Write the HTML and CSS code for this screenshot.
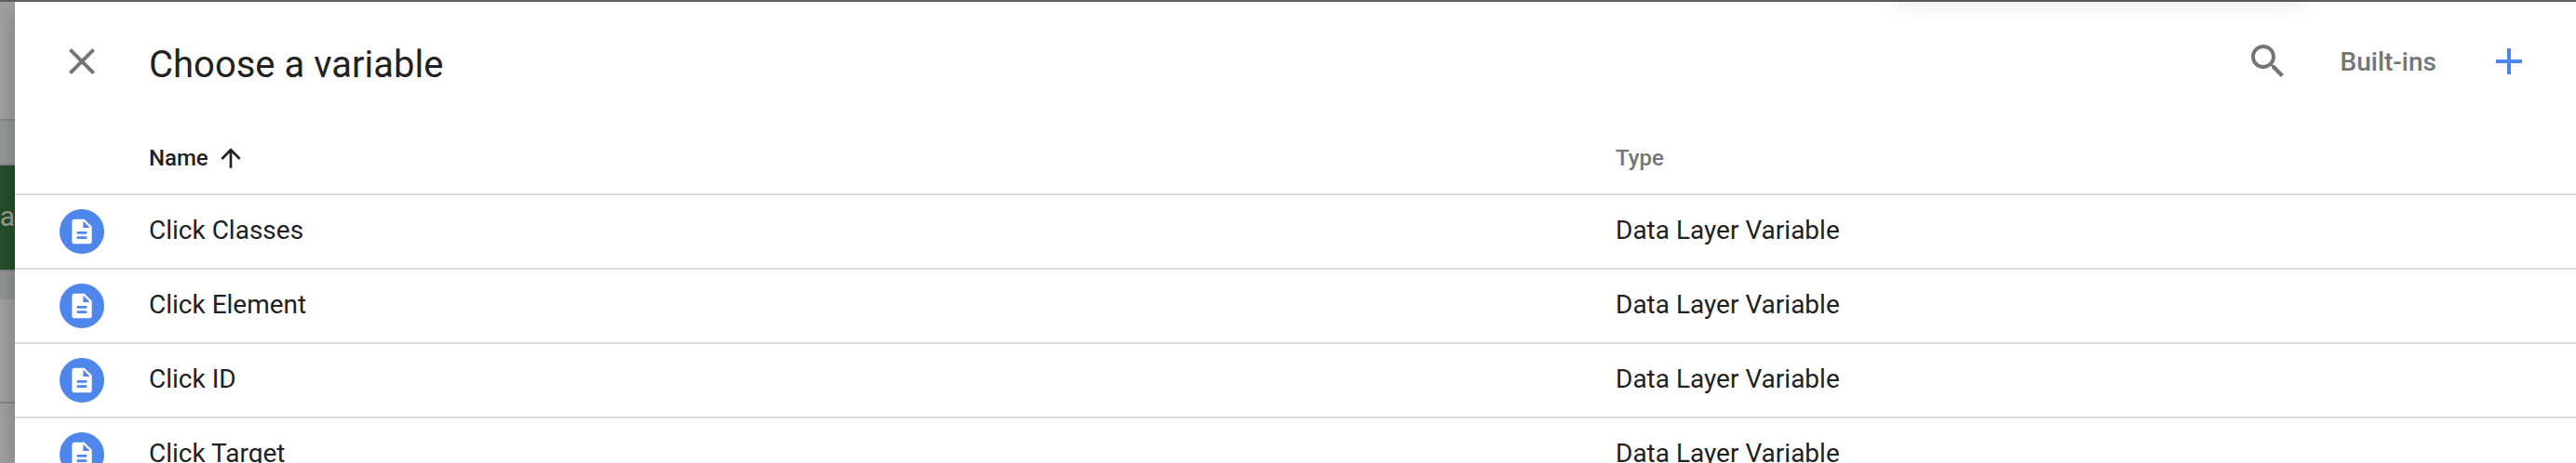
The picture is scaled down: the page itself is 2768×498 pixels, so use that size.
FILE: index.html
```
<!DOCTYPE html>
<html lang="en">
<head>
<meta charset="utf-8">
<title>Choose a variable</title>
<link rel="stylesheet" href="styles.css">
</head>
<body>
<svg class="defs" aria-hidden="true">
  <symbol id="doc" viewBox="0 0 24 24"><path d="M14 2H6c-1.100 0-1.990.9-1.990 2L4 20c0 1.100.890 2 1.990 2H18c1.100 0 2-.9 2-2V8l-6-6zm2 16H8v-2h8v2zm0-4H8v-2h8v2zm-3-5V3.500L18.500 9H13z"/></symbol>
</svg>
<div class="app">
  <div class="backdrop" aria-hidden="true">
    <div class="strip strip-top"></div>
    <div class="strip strip-bar"></div>
    <div class="strip strip-green"><span>oa</span></div>
    <div class="strip strip-gap"></div>
    <div class="strip strip-card"></div>
  </div>
  <main class="panel">
    <header class="header">
      <button class="icon-button" aria-label="Close"><svg viewBox="0 0 24 24"><path d="M19 6.410L17.590 5 12 10.590 6.410 5 5 6.410 10.590 12 5 17.590 6.410 19 12 13.410 17.590 19 19 17.590 13.410 12z"/></svg></button>
      <h1 class="title">Choose a variable</h1>
      <div class="actions">
        <button class="icon-button" aria-label="Search"><svg viewBox="0 0 24 24"><path d="M15.500 14h-.790l-.280-.270C15.410 12.590 16 11.110 16 9.500 16 5.910 13.090 3 9.500 3S3 5.910 3 9.500 5.910 16 9.500 16c1.610 0 3.090-.590 4.230-1.570l.270.280v.790l5 4.990L20.490 19l-4.990-5zm-6 0C7.010 14 5 11.990 5 9.500S7.010 5 9.500 5 14 7.010 14 9.500 11.990 14 9.500 14z"/></svg></button>
        <button class="text-button">Built-ins</button>
        <button class="icon-button add" aria-label="New variable"><svg viewBox="0 0 24 24"><path d="M19 13h-6v6h-2v-6H5v-2h6V5h2v6h6v2z"/></svg></button>
      </div>
    </header>
    <table class="variables">
      <colgroup><col class="col-icon"><col><col class="col-type"></colgroup>
      <thead>
        <tr>
          <td></td>
          <th scope="col" aria-sort="ascending"><button class="sort">Name<svg viewBox="0 0 24 24"><path d="M4 12l1.410 1.410L11 7.830V20h2V7.830l5.580 5.590L20 12l-8-8-8 8z"/></svg></button></th>
          <th scope="col" class="type">Type</th>
        </tr>
      </thead>
      <tbody>
        <tr><td class="kind"><span class="badge"><svg><use href="#doc"/></svg></span></td><td>Click Classes</td><td>Data Layer Variable</td></tr>
        <tr><td class="kind"><span class="badge"><svg><use href="#doc"/></svg></span></td><td>Click Element</td><td>Data Layer Variable</td></tr>
        <tr><td class="kind"><span class="badge"><svg><use href="#doc"/></svg></span></td><td>Click ID</td><td>Data Layer Variable</td></tr>
        <tr><td class="kind"><span class="badge"><svg><use href="#doc"/></svg></span></td><td>Click Target</td><td>Data Layer Variable</td></tr>
      </tbody>
    </table>
  </main>
</div>
<div class="top-shadow" aria-hidden="true"></div>
</body>
</html>
```
FILE: styles.css
```
* {
  box-sizing: border-box;
}

body {
  margin: 0;
  height: 100vh;
  overflow: hidden;
  font-family: Roboto, sans-serif;
  font-size: 28px;
  color: #212121;
  background: #fff;
}

.defs {
  display: none;
}

.app {
  display: flex;
  height: 100%;
  overflow: hidden;
  border-top: 2px solid #605d64;
}

.backdrop {
  display: flex;
  flex-direction: column;
  flex: 0 0 16px;
  overflow: hidden;
  background: #a1a1a1;
}

.strip {
  flex-shrink: 0;
  border-bottom: 2px solid #868788;
}

.strip-top {
  height: 128px;
}

.strip-bar {
  height: 48px;
  background: #979998;
}

.strip-green {
  display: flex;
  align-items: center;
  justify-content: flex-end;
  height: 112px;
  padding-bottom: 4px;
  border: 0;
  background: #264f29;
  color: #9a9f9a;
  font-size: 30px;
}

.strip-gap {
  height: 32px;
  border: 0;
  border-top: 2px solid #868788;
  background: #939695;
}

.strip-card {
  height: 112px;
}

.panel {
  flex: 1;
  min-width: 0;
  background: #fff;
  box-shadow: 0 8px 24px rgba(0, 0, 0, 0.25);
}

.header {
  display: flex;
  align-items: flex-start;
  height: 128px;
  padding: 40px 48px 0;
}

button {
  padding: 0;
  border: 0;
  background: none;
  font: inherit;
  color: inherit;
  cursor: pointer;
}

svg {
  display: block;
  fill: currentColor;
}

.icon-button {
  width: 48px;
  height: 48px;
  color: #757575;
}

.icon-button svg {
  width: 48px;
  height: 48px;
}

.icon-button.add {
  color: #4f86ec;
}

.title {
  margin: 4px 0 0 48px;
  font-size: 40px;
  font-weight: 400;
  line-height: 48px;
}

.actions {
  display: flex;
  align-items: center;
  gap: 54px;
  margin-left: auto;
}

.text-button {
  color: #757575;
  font-weight: 500;
}

.variables {
  width: 100%;
  border-collapse: separate;
  border-spacing: 0;
  table-layout: fixed;
}

.col-icon {
  width: 144px;
}

.col-type {
  width: 37.5%;
}

.variables td,
.variables th {
  height: 80px;
  padding: 0 0 4px;
  border-bottom: 2px solid #dadce0;
  text-align: left;
  vertical-align: middle;
}

.variables .kind {
  padding: 0 0 0 48px;
}

.variables th {
  padding: 2px 0 0;
  font-size: 24px;
  font-weight: 500;
}

.variables .type {
  color: #757575;
}

.sort {
  display: flex;
  align-items: center;
  gap: 8px;
}

.sort svg {
  width: 32px;
  height: 32px;
}

.badge {
  display: grid;
  place-items: center;
  width: 48px;
  height: 48px;
  border-radius: 50%;
  background: #4f86ec;
  color: #fff;
}

.badge svg {
  width: 32px;
  height: 32px;
}

.top-shadow {
  position: absolute;
  top: -20px;
  right: 292px;
  width: 440px;
  height: 20px;
  box-shadow: 0 2px 24px rgba(0, 0, 0, 0.12);
}
```
